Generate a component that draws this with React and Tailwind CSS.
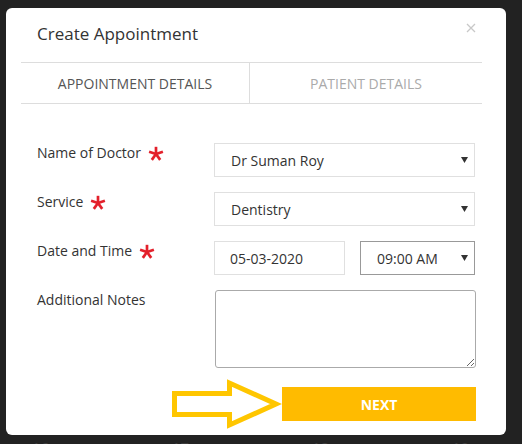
import React from 'react';

const font = { fontFamily: '"Open Sans", "Liberation Sans", sans-serif' };

// red required-field mark
function Required() {
  return (
    <svg width="16" height="16" viewBox="0 0 16 16" className="ml-[7px] mt-[3px] shrink-0">
      <g stroke="#e3202b" strokeWidth="2.7" strokeLinecap="butt">
        <line x1="8" y1="8" x2="8" y2="0.8" />
        <line x1="8" y1="8" x2="14.9" y2="5.8" />
        <line x1="8" y1="8" x2="12.2" y2="13.9" />
        <line x1="8" y1="8" x2="3.8" y2="13.9" />
        <line x1="8" y1="8" x2="1.1" y2="5.8" />
      </g>
    </svg>
  );
}

function Caret() {
  return (
    <svg width="7" height="6" viewBox="0 0 7 6" className="shrink-0">
      <path d="M0 0h7L3.5 6z" fill="#333" />
    </svg>
  );
}

function Label({ text, required }) {
  return (
    <div className="w-[177px] shrink-0 flex items-start text-[14px] leading-[20px] text-[#333]">
      <span>{text}</span>
      {required && <Required />}
    </div>
  );
}

function SelectBox({ value }) {
  return (
    <div className="w-[261px] h-[34px] border border-[#e0e0e0] flex items-center justify-between pl-[16px] pr-[6px] text-[14px] text-[#333]">
      <span>{value}</span>
      <Caret />
    </div>
  );
}

export default function App() {
  return (
    <div className="w-[522px] h-[444px] bg-[#222] overflow-hidden pt-[8px] pl-[6px]" style={font}>
      <div className="w-[500px] h-[427px] bg-white rounded-[6px] relative">
        {/* close */}
        <svg width="10" height="10" viewBox="0 0 10 10" className="absolute left-[460px] top-[15px]">
          <path d="M1 1l8 8M9 1l-8 8" stroke="#c8c8c8" strokeWidth="1.3" />
        </svg>

        <div className="pt-[14px] pl-[31px] text-[17px] leading-[24px] text-[#333]">Create Appointment</div>

        {/* tabs */}
        <div className="mt-[16px] ml-[15px] w-[461px] h-[42px] border-y border-[#ddd] flex text-[14px] uppercase">
          <div className="w-[229px] border-r border-[#ddd] flex items-center justify-center text-[#555]">
            Appointment Details
          </div>
          <div className="flex-1 flex items-center justify-center text-[#aaa]">Patient Details</div>
        </div>

        <div className="pl-[31px] mt-[39px] flex flex-col gap-[15px]">
          <div className="flex items-start">
            <Label text="Name of Doctor" required />
            <SelectBox value="Dr Suman Roy" />
          </div>
          <div className="flex items-start">
            <Label text="Service" required />
            <SelectBox value="Dentistry" />
          </div>
          <div className="flex items-start">
            <Label text="Date and Time" required />
            <div className="flex gap-[15px]">
              <div className="w-[131px] h-[34px] border border-[#e0e0e0] flex items-center pl-[15px] text-[14px] text-[#333]">
                05-03-2020
              </div>
              <div className="w-[115px] h-[34px] border border-[#999] flex items-center justify-between pl-[16px] pr-[6px] text-[14px] text-[#333]">
                <span>09:00 AM</span>
                <Caret />
              </div>
            </div>
          </div>
          <div className="flex items-start">
            <Label text="Additional Notes" />
            <textarea className="ml-px w-[261px] h-[78px] border border-[#aaa] rounded-[3px] outline-none" />
          </div>
        </div>

        {/* next */}
        <div className="mt-[10px] pr-[30px] flex justify-end items-center">
          <svg width="110" height="52" viewBox="0 0 110 52" className="shrink-0">
            <polygon
              points="2.5,15.5 57.5,15.5 57.5,5 104,26 57.5,47 57.5,36.5 2.5,36.5"
              fill="none"
              stroke="#ffc600"
              strokeWidth="5"
            />
          </svg>
          <button className="w-[194px] h-[34px] bg-[#ffbb00] text-white text-[14px] font-bold">NEXT</button>
        </div>
      </div>

      {/* calendar behind the dialog */}
      <div className="flex mt-[2px] text-[15px] leading-[20px] text-[#3c3c3c]">
        <span className="ml-[26px] w-[140px]">16</span>
        <span className="w-[140px]">17</span>
        <span className="w-[140px]">18</span>
        <span className="w-[60px]">19</span>
      </div>
    </div>
  );
}
